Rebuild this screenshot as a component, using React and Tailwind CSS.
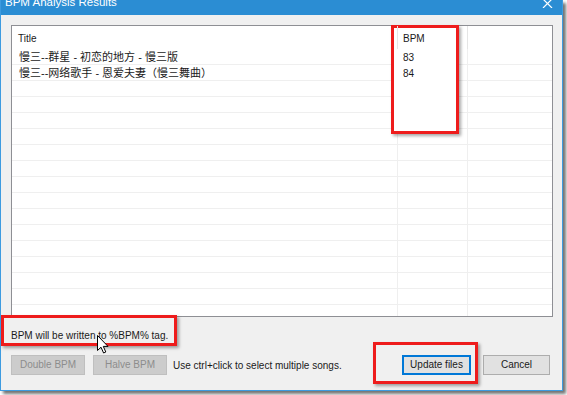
import React from 'react'

const FONT = "font-['Liberation_Sans','Noto_Sans_CJK_SC',sans-serif]"

const songs = [
  { title: '慢三--群星 - 初恋的地方 - 慢三版', bpm: '83' },
  { title: '慢三--网络歌手 - 恩爱夫妻（慢三舞曲）', bpm: '84' },
]

// empty rows fill the rest of the list view
const rows = [...songs, ...Array.from({ length: 15 }, () => ({ title: '', bpm: '' }))]

function Cursor() {
  return (
    <svg width="12" height="19" viewBox="0 0 12 19" className="absolute left-[97px] top-[335px] z-30">
      <path d="M0.5 0.5 L0.5 15.5 L4 12.2 L6.6 18 L8.8 17 L6.3 11.4 L11 11.4 Z" fill="#fff" stroke="#000" strokeWidth="1" strokeLinejoin="round" />
    </svg>
  )
}

function Button({ children, disabled, primary, className = '' }) {
  return (
    <button
      className={`h-[20px] text-[10px] leading-none ${FONT} ${
        disabled
          ? 'bg-[#cccccc] border border-[#bfbfbf] text-[#8d8d8d]'
          : primary
            ? 'bg-[#e1e1e1] border-2 border-[#0078d7] text-[#1a1a1a]'
            : 'bg-[#e1e1e1] border border-[#adadad] text-[#1a1a1a]'
      } ${className}`}
    >
      {children}
    </button>
  )
}

export default function App() {
  return (
    <div className={`relative w-[567px] h-[395px] overflow-hidden bg-white ${FONT}`}>
      <div className="w-[563px] h-[391px] flex flex-col bg-[#f0f0f0] border-x border-b border-[#3d9be0] shadow-[3px_3px_3px_rgba(0,0,0,0.55)]">
        {/* title bar */}
        <div className="h-[15px] shrink-0 bg-[#2b8dd3] flex items-start justify-between overflow-hidden">
          <span className="ml-[4px] -mt-[3px] text-[11.5px] leading-none text-white whitespace-nowrap">BPM Analysis Results</span>
          <svg width="11" height="9" viewBox="0 0 11 9" className="mr-[9px] -mt-[1px]">
            <path d="M1 0 L10 9 M10 0 L1 9" stroke="#fff" strokeWidth="1.2" />
          </svg>
        </div>

        <div className="flex flex-col flex-1 pl-[10px] pr-[9px] pt-[10px]">
          {/* list view */}
          <div className="h-[292px] border border-[#8e8f94] bg-white overflow-hidden">
            <div className="flex h-[23px] text-[10px] text-[#1a1a1a]">
              <div className="w-[385px] pl-[6px] pt-[2px] flex items-center">Title</div>
              <div className="w-[70px] pl-[5px] pt-[2px] flex items-center border-l border-[#e5e5e5] relative z-20">BPM</div>
              <div className="flex-1 border-l border-[#e5e5e5]" />
            </div>
            {rows.map((r, i) => (
              <div key={i} className="flex h-[16px] border-b border-[#efefef] text-[#1a1a1a]">
                <div className="w-[385px] pl-[7px] pt-[1px] text-[11px] leading-[15px] whitespace-nowrap">{r.title}</div>
                <div className="w-[70px] pl-[5px] pt-[1px] text-[10px] leading-[15px] border-l border-[#efefef]">
                  <span className="relative z-20">{r.bpm}</span>
                </div>
                <div className="flex-1 border-l border-[#efefef]" />
              </div>
            ))}
          </div>

          <p className="mt-[13px] text-[10px] leading-[12px] text-[#1a1a1a]">BPM will be written to %BPM% tag.</p>

          <div className="mt-[13px] flex items-center pr-[3px]">
            <Button disabled className="w-[74px]">Double BPM</Button>
            <Button disabled className="w-[74px] ml-[8px]">Halve BPM</Button>
            <span className="ml-[6px] text-[10px] text-[#1a1a1a] whitespace-nowrap">Use ctrl+click to select multiple songs.</span>
            <div className="flex-1" />
            <Button primary className="w-[69px]">Update files</Button>
            <Button className="w-[67px] ml-[12px]">Cancel</Button>
          </div>
        </div>
      </div>

      {/* annotation boxes */}
      <div className="absolute left-[391px] top-[25px] w-[68px] h-[109px] border-[3px] border-[#ee1c1c] bg-white z-10 shadow-[2px_2px_3px_rgba(0,0,0,0.35)]" />
      <div className="absolute left-[1px] top-[315px] w-[176px] h-[31px] border-[3px] border-[#ee1c1c] z-10 shadow-[2px_2px_3px_rgba(0,0,0,0.35)]" />
      <div className="absolute left-[373px] top-[342px] w-[105px] h-[42px] border-[3px] border-[#ee1c1c] z-10 shadow-[2px_2px_3px_rgba(0,0,0,0.35)]" />

      <Cursor />
    </div>
  )
}
